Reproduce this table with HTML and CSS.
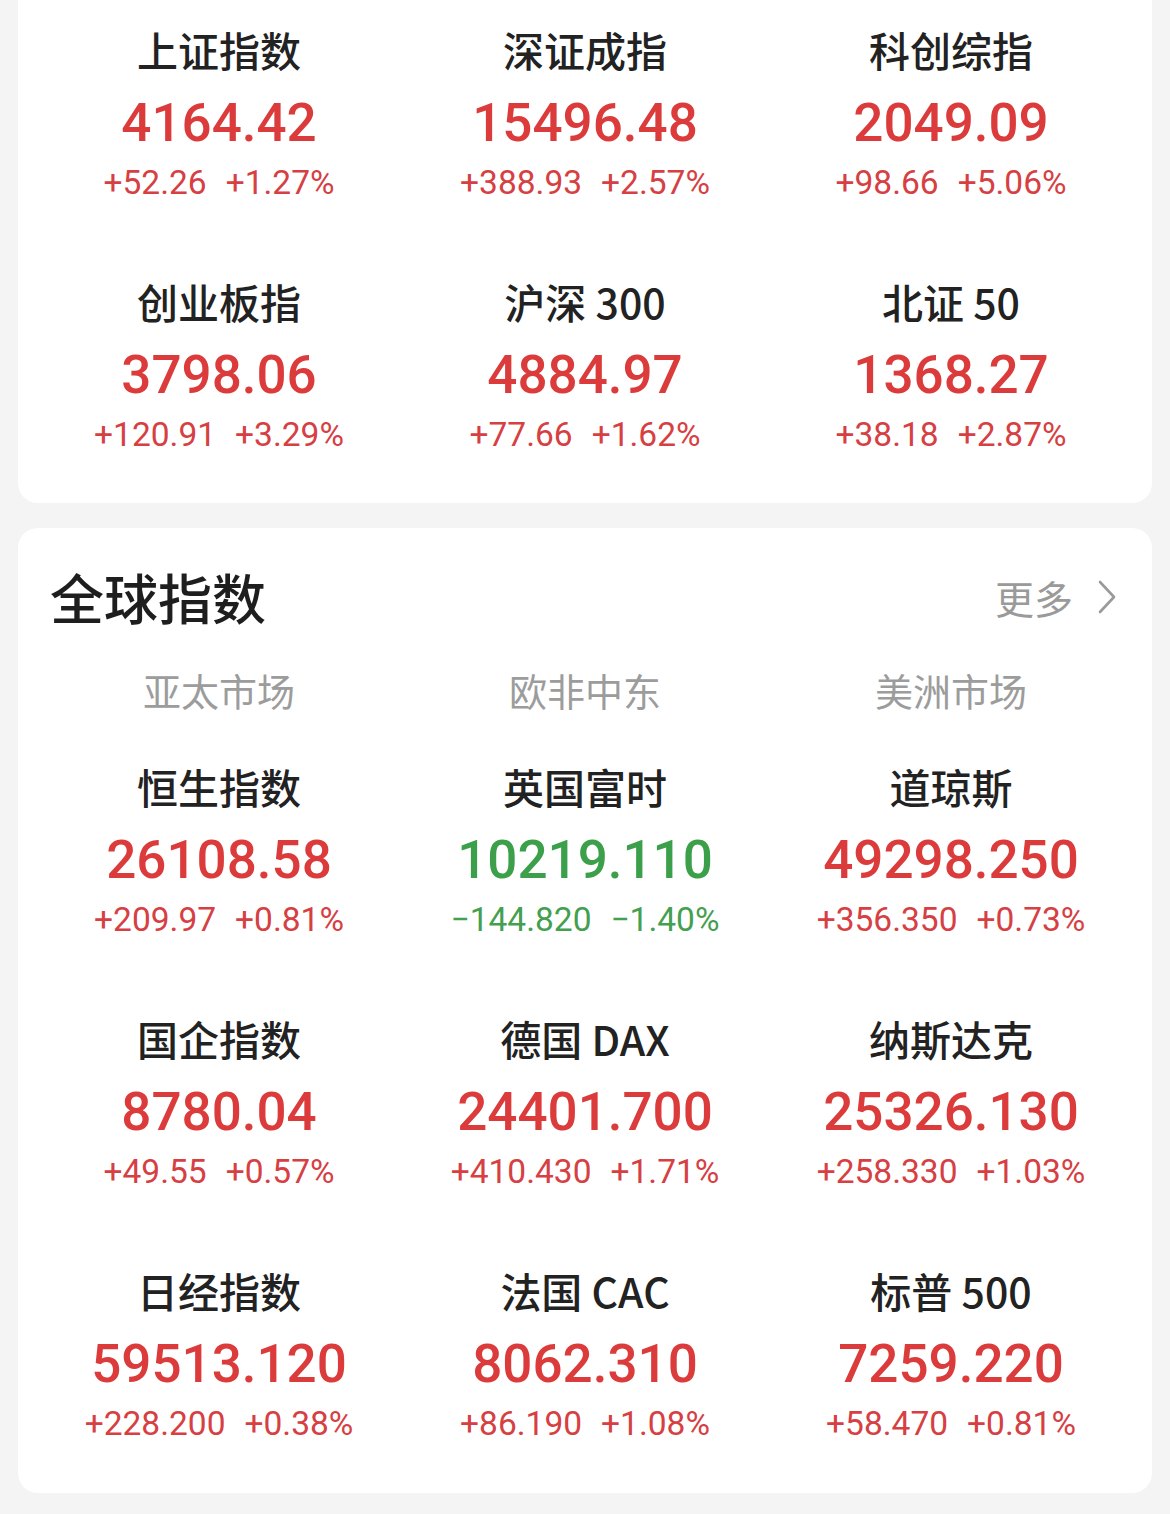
FILE: index.html
```html
<!DOCTYPE html>
<html lang="zh-CN">
<head>
<meta charset="utf-8">
<title>指数</title>
<link rel="stylesheet" href="styles.css">
</head>
<body>
<div class="page">
  <section class="card card-top">
    <div class="grid">
      <div class="cell"><div class="name">上证指数</div><div class="value up">4164.42</div><div class="change up"><span>+52.26</span><span>+1.27%</span></div></div>
      <div class="cell"><div class="name">深证成指</div><div class="value up">15496.48</div><div class="change up"><span>+388.93</span><span>+2.57%</span></div></div>
      <div class="cell"><div class="name">科创综指</div><div class="value up">2049.09</div><div class="change up"><span>+98.66</span><span>+5.06%</span></div></div>
      <div class="cell"><div class="name">创业板指</div><div class="value up">3798.06</div><div class="change up"><span>+120.91</span><span>+3.29%</span></div></div>
      <div class="cell"><div class="name">沪深 300</div><div class="value up">4884.97</div><div class="change up"><span>+77.66</span><span>+1.62%</span></div></div>
      <div class="cell"><div class="name">北证 50</div><div class="value up">1368.27</div><div class="change up"><span>+38.18</span><span>+2.87%</span></div></div>
    </div>
  </section>

  <section class="card card-global">
    <div class="head">
      <h2 class="title">全球指数</h2>
      <div class="more">更多<svg class="chev" viewBox="0 0 20 36" width="20" height="36"><path d="M3 3 L17 18 L3 33" fill="none" stroke="#9a9a9a" stroke-width="2.6" stroke-linecap="round" stroke-linejoin="round"/></svg></div>
    </div>
    <div class="grid regions">
      <div class="region">亚太市场</div>
      <div class="region">欧非中东</div>
      <div class="region">美洲市场</div>
    </div>
    <div class="grid">
      <div class="cell"><div class="name">恒生指数</div><div class="value up">26108.58</div><div class="change up"><span>+209.97</span><span>+0.81%</span></div></div>
      <div class="cell"><div class="name">英国富时</div><div class="value down">10219.110</div><div class="change down"><span>−144.820</span><span>−1.40%</span></div></div>
      <div class="cell"><div class="name">道琼斯</div><div class="value up">49298.250</div><div class="change up"><span>+356.350</span><span>+0.73%</span></div></div>
      <div class="cell"><div class="name">国企指数</div><div class="value up">8780.04</div><div class="change up"><span>+49.55</span><span>+0.57%</span></div></div>
      <div class="cell"><div class="name">德国 DAX</div><div class="value up">24401.700</div><div class="change up"><span>+410.430</span><span>+1.71%</span></div></div>
      <div class="cell"><div class="name">纳斯达克</div><div class="value up">25326.130</div><div class="change up"><span>+258.330</span><span>+1.03%</span></div></div>
      <div class="cell"><div class="name">日经指数</div><div class="value up">59513.120</div><div class="change up"><span>+228.200</span><span>+0.38%</span></div></div>
      <div class="cell"><div class="name">法国 CAC</div><div class="value up">8062.310</div><div class="change up"><span>+86.190</span><span>+1.08%</span></div></div>
      <div class="cell"><div class="name">标普 500</div><div class="value up">7259.220</div><div class="change up"><span>+58.470</span><span>+0.81%</span></div></div>
    </div>
  </section>
</div>
</body>
</html>
```

FILE: styles.css
```css
* { box-sizing: border-box; }
html, body {
  margin: 0;
  padding: 0;
  background: #f4f4f4;
}
body {
  width: 1170px;
  height: 1514px;
  overflow: hidden;
  font-family: "Noto Sans CJK SC", "Noto Sans", sans-serif;
}
.page {
  padding: 0 18px;
  display: flex;
  flex-direction: column;
  gap: 25px;
}
.card {
  background: #ffffff;
  border-radius: 20px;
  padding: 0 18px;
}
.card-top {
  border-radius: 0 0 20px 20px;
  height: 503px;
}
.card-global {
  height: 965px;
}
.grid {
  display: grid;
  grid-template-columns: repeat(3, 1fr);
}
.cell {
  height: 252px;
  padding-top: 23px;
  display: flex;
  flex-direction: column;
  align-items: center;
}
.name {
  height: 52px;
  line-height: 52px;
  font-size: 41px;
  font-weight: 500;
  color: #222222;
  white-space: nowrap;
}
.value {
  margin-top: 16px;
  height: 64px;
  line-height: 64px;
  font-family: Roboto, "Liberation Sans", sans-serif;
  font-size: 53px;
  font-weight: 500;
  white-space: nowrap;
}
.change {
  margin-top: 8px;
  height: 40px;
  line-height: 40px;
  font-family: Roboto, "Liberation Sans", sans-serif;
  font-size: 33.5px;
  font-weight: 400;
  display: flex;
  gap: 19px;
  white-space: nowrap;
}
.up { color: #dc3b3c; }
.change.up { color: #d64043; }
.down { color: #3c9f4a; }
.change.down { color: #449f50; }

.head {
  height: 138px;
  padding: 0 17px 0 14px;
  display: flex;
  align-items: center;
  justify-content: space-between;
}
.title {
  margin: 0;
  font-size: 54px;
  font-weight: 500;
  color: #1e1e1e;
  line-height: 60px;
}
.more {
  display: flex;
  align-items: center;
  gap: 24px;
  font-size: 39px;
  color: #9a9a9a;
}
.chev { display: block; }
.regions {
  height: 71px;
}
.region {
  text-align: center;
  font-size: 38px;
  color: #9c9c9c;
  line-height: 48px;
}
```
